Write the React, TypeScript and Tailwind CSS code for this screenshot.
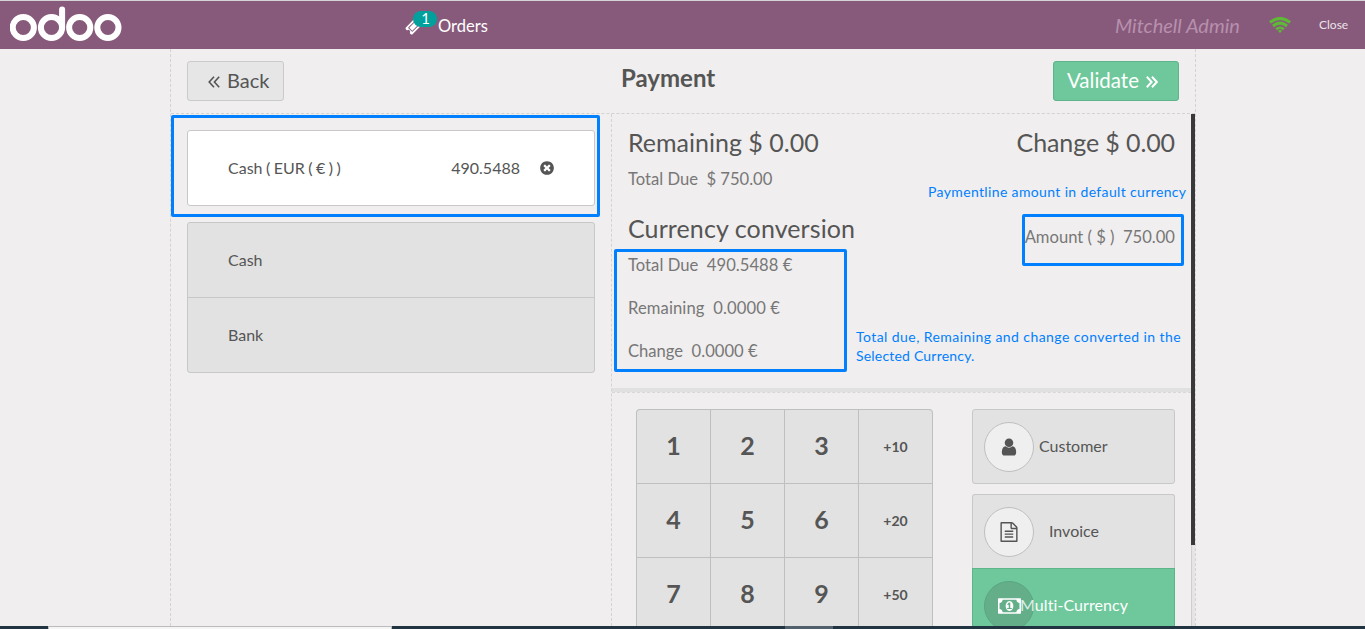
import React from 'react';

const PATHS = {
  user: 'M1536 1399q0 109-62.5 187t-150.5 78h-854q-88 0-150.5-78t-62.5-187q0-85 8.5-160.5t31.5-152 58.5-131 94-89 134.5-34.5q131 128 313 128t313-128q76 0 134.5 34.5t94 89 58.5 131 31.5 152 8.5 160.5zm-256-887q0 159-112.5 271.5t-271.5 112.5-271.5-112.5-112.5-271.5 112.5-271.5 271.5-112.5 271.5 112.5 112.5 271.5z',
  file: 'M1596 380q28 28 48 76t20 88v1152q0 40-28 68t-68 28h-1344q-40 0-68-28t-28-68v-1600q0-40 28-68t68-28h896q40 0 88 20t76 48zm-444-244v376h376q-10-29-22-41l-313-313q-12-12-41-22zm384 1528v-1024h-416q-40 0-68-28t-28-68v-416h-768v1536h1280zm-1024-864q0-14 9-23t23-9h704q14 0 23 9t9 23v64q0 14-9 23t-23 9h-704q-14 0-23-9t-9-23v-64zm736 224q14 0 23 9t9 23v64q0 14-9 23t-23 9h-704q-14 0-23-9t-9-23v-64q0-14 9-23t23-9h704zm0 256q14 0 23 9t9 23v64q0 14-9 23t-23 9h-704q-14 0-23-9t-9-23v-64q0-14 9-23t23-9h704z',
  remove: 'M1277 1122q0-26-19-45l-181-181 181-181q19-19 19-45 0-27-19-46l-90-90q-19-19-46-19-26 0-45 19l-181 181-181-181q-19-19-45-19-27 0-46 19l-90 90q-19 19-19 46 0 26 19 45l181 181-181 181q-19 19-19 45 0 27 19 46l90 90q19 19 46 19 26 0 45-19l181-181 181 181q19 19 45 19 27 0 46-19l90-90q19-19 19-46zm387-226q0 209-103 385.5t-279.5 279.5-385.5 103-385.5-103-279.5-279.5-103-385.5 103-385.5 279.5-279.5 385.5-103 385.5 103 279.5 279.5 103 385.5z',
  money: 'M768 1152h384v-96h-128v-448h-114l-148 137 77 80q42-37 55-57h2v288h-128v96zm512-256q0 70-21 142t-59.5 134-101.5 101-138 39-138-39-101.5-101-59.5-134-21-142 21-142 59.5-134 101.5-101 138-39 138 39 101.5 101 59.5 134 21 142zm512 256v-512q-106 0-181-75t-75-181h-1152q0 106-75 181t-181 75v512q106 0 181 75t75 181h1152q0-106 75-181t181-75zm128-832v1152q0 26-19 45t-45 19h-1792q-26 0-45-19t-19-45v-1152q0-26 19-45t45-19h1792q26 0 45 19t19 45z',
  ticket: 'M1024 452l316 316-572 572-316-316zm-211 979l618-618q19-19 19-45t-19-45l-362-362q-18-18-45-18t-45 18l-618 618q-19 19-19 45t19 45l362 362q18 18 45 18t45-18zm889-637l-907 908q-37 37-90.5 37t-90.5-37l-126-125q56-56 56-136t-56-136-136-56-136 56l-125-126q-37-37-37-90.5t37-90.5l907-906q37-37 90.5-37t90.5 37l125 125q-56 56-56 136t56 136 136 56 136-56l126 125q37 37 37 90.5t-37 90.5z',
};

function Icon({ name, className, width = 1792 }: { name: keyof typeof PATHS; className: string; width?: number }) {
  return (
    <svg viewBox={`0 0 ${width} 1792`} fill="currentColor" className={className}>
      <path d={PATHS[name]} />
    </svg>
  );
}

function Chevrons({ flip }: { flip?: boolean }) {
  return (
    <svg viewBox="0 0 12 12" className="mt-[2px] h-3 w-3" fill="none" stroke="currentColor" strokeWidth={flip ? 2 : 1.6}>
      <path d={flip ? 'M0.8 0.8 5.6 6 0.8 11.2M6 0.8 10.8 6 6 11.2' : 'M6 0.8 1.2 6 6 11.2M11.2 0.8 6.4 6 11.2 11.2'} />
    </svg>
  );
}

function Logo() {
  return (
    <svg viewBox="0 0 112 36" className="h-9 w-28" fill="none" stroke="#fff" strokeWidth="6">
      <circle cx="13.3" cy="21.5" r="10.6" />
      <circle cx="41.5" cy="21.5" r="10.6" />
      <circle cx="69.7" cy="21.5" r="10.6" />
      <circle cx="97.9" cy="21.5" r="10.6" />
      <path d="M52.1 22V3.5" strokeLinecap="round" />
    </svg>
  );
}

function Header() {
  return (
    <header className="flex h-[49px] shrink-0 items-start border-t border-[#d5d3d6] bg-[#875a7b] text-white">
      <div className="w-[405px] pl-[9.5px] pt-[5px]"><Logo /></div>
      <div className="relative flex h-12 w-[710px] items-center pl-[33px]">
        <Icon name="ticket" className="absolute left-0 top-[17px] h-[17px] w-[17px]" />
        <span className="absolute left-2 top-[10px] h-4 w-6 rounded-full bg-[#00a09d] pl-px text-center text-[15px] leading-[14px]">1</span>
        <span className="pt-px text-[16.5px] leading-6">Orders</span>
      </div>
      <div className="flex h-12 w-[155px] items-center text-xl font-normal italic leading-6 text-[#b790ae]">Mitchell Admin</div>
      <div className="w-[49px] pt-4">
        <svg viewBox="0 0 22 16" className="-ml-px h-4 w-[22px]" fill="none" stroke="#5eb937" strokeWidth="3">
          <path d="M0.9 5.4Q11-2.6 21.1 5.4" />
          <path d="M4 9Q11 3.3 18 9" />
          <path d="M7.1 12.3Q11 9.2 14.9 12.3" strokeWidth="2.6" />
          <path d="M8.8 13.7Q11 12.4 13.2 13.7L11 16Z" fill="#5eb937" stroke="none" />
        </svg>
      </div>
      <div className="flex h-12 items-center text-xs text-[#ece3ea]">Close</div>
    </header>
  );
}

function Methods() {
  return (
    <section className="w-[440px] shrink-0 px-4 pt-4">
      <div className="flex h-[76px] items-center rounded-[3px] border border-[#c8c8c8] bg-white pl-10 pr-[39px]">
        <span className="grow [word-spacing:-0.6px]">Cash ( EUR ( € ) )</span>
        <span className="w-[69px] text-right">490.5488</span>
        <Icon name="remove" className="ml-[19px] h-4 w-4" />
      </div>
      <div className="mt-4 rounded-[3px] border border-[#c8c8c8] bg-[#e2e2e2]">
        <div className="flex h-[75px] items-center border-b border-[#c8c8c8] px-10">Cash</div>
        <div className="flex h-[74px] items-center px-10">Bank</div>
      </div>
    </section>
  );
}

function Summary() {
  return (
    <div className="flex h-[278px] shrink-0 justify-between border-b-4 border-[#e0e0e0] pl-4 pr-4 text-[16.6px] text-[#777]">
      <div className="flex flex-col">
        <div className="mt-[12px] text-[25px] leading-8 text-[#555]">Remaining $ 0.00</div>
        <div className="mt-[11px] h-5 leading-5">Total Due&nbsp; $ 750.00</div>
        <div className="mt-[23px] text-[25px] leading-8 tracking-[0.1px] text-[#555]">Currency conversion</div>
        <div className="mt-[11px] h-5 leading-5 tracking-[0.04px]">Total Due&nbsp; 490.5488 €</div>
        <div className="mt-[23px] h-5 leading-5 tracking-[0.1px]">Remaining&nbsp; 0.0000 €</div>
        <div className="mt-[23px] h-5 leading-5">Change&nbsp; 0.0000 €</div>
      </div>
      <div className="flex flex-col items-end">
        <div className="mt-[12px] text-[25px] leading-8 tracking-[-0.1px] text-[#555]">Change $ 0.00</div>
        <div className="mt-[69px] h-5 leading-5">Amount ( $ )&nbsp; 750.00</div>
      </div>
    </div>
  );
}

const KEYS = ['1', '2', '3', '+10', '4', '5', '6', '+20', '7', '8', '9', '+50'];

function Keypad() {
  return (
    <div className="grid h-[300px] w-[297px] shrink-0 grid-cols-[repeat(4,74px)] auto-rows-[74px] rounded-[4px] border-l border-t border-[#bfbfbf] bg-[#e2e2e2] font-bold">
      {KEYS.map((k, i) => (
        <div key={k} className={`flex items-center justify-center border-b border-r border-[#bfbfbf] ${k.length > 1 ? 'text-sm' : 'pb-[2px] text-[25px]'} ${i === 3 ? 'rounded-tr-[4px]' : ''}`}>
          {k}
        </div>
      ))}
    </div>
  );
}

function Actions() {
  return (
    <div className="w-[203px] shrink-0">
      <div className="flex h-[75px] items-center rounded-[3px] border border-[#c8c8c8] bg-[#e2e2e2] pl-[11px]">
        <span className="flex h-[50px] w-[50px] items-center justify-center rounded-full border border-[#bfbfbf] bg-[#efefef]"><Icon name="user" className="h-5 w-5" /></span>
        <span className="ml-[5px] pb-[2px]">Customer</span>
      </div>
      <div className="mt-[10px] flex h-[75px] items-center rounded-t-[3px] border border-b-0 border-[#c8c8c8] bg-[#e2e2e2] pl-[11px]">
        <span className="flex h-[50px] w-[50px] items-center justify-center rounded-full border border-[#bfbfbf] bg-[#efefef]"><Icon name="file" className="h-5 w-5" /></span>
        <span className="ml-[15px] pb-[2px]">Invoice</span>
      </div>
      <div className="-mt-px flex h-[75px] items-center border border-[#5db38a] bg-[#6ec89b] pl-[11px] text-white">
        <span className="flex h-[50px] w-[50px] items-center justify-center rounded-full border border-[#5ba583] bg-[#64af8a]"><Icon name="money" width={1920} className="h-[22px] w-[23px]" /></span>
        <span className="-ml-[14px] pb-[2px] tracking-[0.08px]"><span className="text-[#dcefe5]">M</span>ulti-Currency</span>
      </div>
    </div>
  );
}

export default function App() {
  return (
    <div className="relative flex h-[629px] w-[1365px] flex-col overflow-hidden bg-[#f0eeee] font-['Lato',sans-serif] text-base text-[#555]">
      <Header />
      <main className="ml-[170px] flex h-[577px] w-[1026px] flex-col border-x border-dashed border-[#d3d3d3]">
        <div className="flex h-[65px] shrink-0 items-start border-b border-dashed border-[#d3d3d3] pl-4 pr-4 pt-3">
          <div className="flex h-10 w-[97px] items-center gap-[7px] rounded-[3px] border border-[#cacaca] bg-[#e6e6e6] pl-5 text-xl"><Chevrons /><span className="pb-[2px]">Back</span></div>
          <div className="ml-[337px] grow pt-[1px] text-2xl font-bold">Payment</div>
          <div className="flex h-10 w-[126px] items-center gap-[7px] rounded-[3px] border border-[#5db38a] bg-[#6ec89b] pl-[13px] text-[20.5px] text-white"><span className="pb-[2px]">Validate</span><Chevrons flip /></div>
        </div>
        <div className="flex h-[512px] overflow-hidden">
          <Methods />
          <section className="flex w-[580px] shrink-0 flex-col border-l border-dashed border-[#d3d3d3]">
            <Summary />
            <div className="flex h-[234px] justify-between overflow-hidden border-t border-dashed border-[#d8d8d8] pl-6 pr-4 pt-4">
              <Keypad />
              <Actions />
            </div>
          </section>
          <div className="h-full w-1 shrink-0 border-l border-[#cfcfcf] bg-[#e5e5e5]"><div className="-ml-px h-[431px] w-1 bg-[#393939]" /></div>
        </div>
      </main>
      <footer className="flex h-[3px] shrink-0 bg-[#203442]">
        <div className="ml-12 w-[344px] border-x border-t border-[#bbb] bg-[#f5f5f5]" />
        <div className="ml-[393px] w-12 bg-[#52616d]" />
      </footer>

      <div className="absolute left-[171px] top-[115px] h-[102px] w-[429px] rounded-[2px] border-[3px] border-[#0080ff]" />
      <div className="absolute left-[614px] top-[249px] h-[123px] w-[233px] rounded-[2px] border-[3px] border-[#0080ff]" />
      <div className="absolute left-[1022px] top-[214px] h-[52px] w-[162px] rounded-[2px] border-[3px] border-[#0080ff]" />
      <div className="absolute left-[928px] top-[182px] whitespace-nowrap text-sm leading-[19px] tracking-[0.36px] text-[#0080ff]">Paymentline amount in default currency</div>
      <div className="absolute left-[856px] top-[327px] whitespace-nowrap text-sm leading-[19px] tracking-[0.43px] text-[#0080ff]">Total due, Remaining and change converted in the<br /><span className="tracking-[0.2px]">Selected Currency.</span></div>
    </div>
  );
}
